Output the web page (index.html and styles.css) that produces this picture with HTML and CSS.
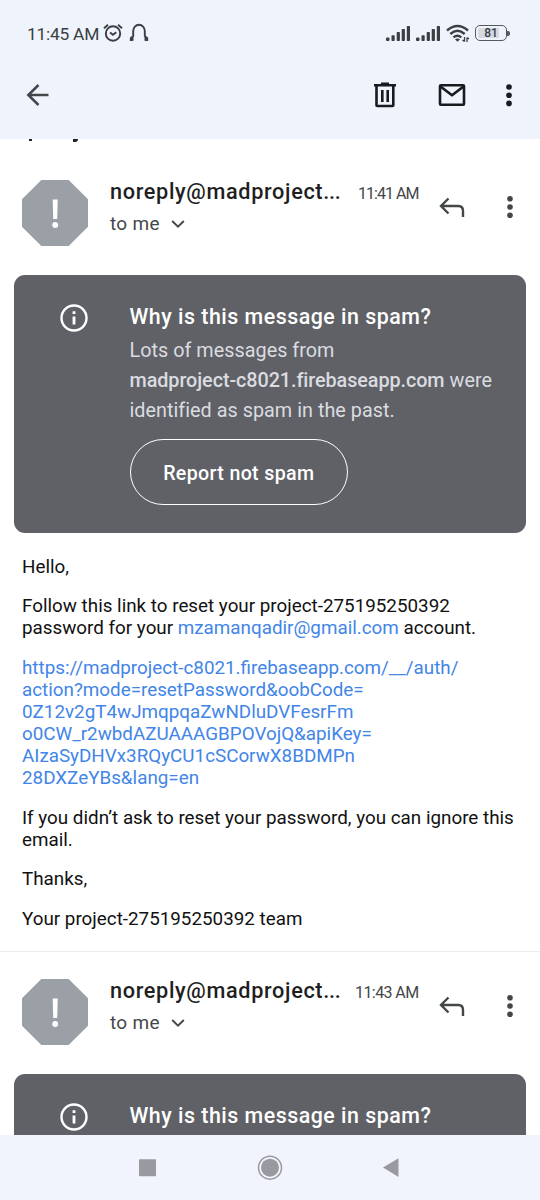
FILE: index.html
```
<!DOCTYPE html>
<html lang="en">
<head>
<meta charset="utf-8">
<title>Mail</title>
<link rel="stylesheet" href="styles.css">
</head>
<body>
<div class="screen">
  <header class="top">
    <div class="status">
      <span class="clock">11:45 AM</span>
      <svg class="alarm" width="20" height="20" viewBox="0 0 20 20" fill="none" stroke="#3b3e42" stroke-width="1.9"><circle cx="10" cy="10.5" r="7.2"/><path d="M1 5.2 5 1.8M19 5.2 15 1.8M7 9.5 10 11.7 13.3 9.2"/></svg>
      <svg class="phones" width="20" height="20" viewBox="0 0 20 20" fill="none" stroke="#3b3e42" stroke-width="1.9"><path d="M3.500 17H1.800V15.500L4.200 13V8A5.800 6.200 0 0 1 15.800 8V13L18.200 15.500V17H16.500"/><path d="M1.200 16h3.300M15.500 16h3.300" stroke-width="3.600"/></svg>
      <svg class="signal" width="25" height="17" viewBox="0 0 25 17" fill="#3b3e42"><rect x="0" y="12.500" width="3.500" height="3.500" rx="1"/><rect x="5.500" y="10.300" width="3.200" height="5.700" rx=".7"/><rect x="10.700" y="7" width="3.200" height="9" rx=".7"/><rect x="15.700" y="4" width="3.200" height="12" rx=".7"/><rect x="20.800" y="1" width="3.200" height="15" rx=".7"/></svg>
      <svg class="signal second" width="25" height="17" viewBox="0 0 25 17" fill="#3b3e42"><rect x="0" y="12.500" width="3.500" height="3.500" rx="1"/><rect x="5.500" y="10.300" width="3.200" height="5.700" rx=".7"/><rect x="10.700" y="7" width="3.200" height="9" rx=".7"/><rect x="15.700" y="4" width="3.200" height="12" rx=".7"/><rect x="20.800" y="1" width="3.200" height="15" rx=".7"/></svg>
      <svg class="wifi" width="24" height="19" viewBox="0 0 24 19" fill="none" stroke="#3b3e42" stroke-width="2.400"><path d="M1 6.500Q11.500-2.500 22 6.500M4.300 10Q11.500 3.500 18.700 10M7.500 13.300Q11.500 10 15.300 13.300"/><path d="M9 15.300Q11.500 13.700 14 15.300L11.500 17.800Z" fill="#3b3e42" stroke="none"/><path d="M18.500 13v4.500M16.500 16l2 1.500M21 18v-4.500M23 15l-2-1.500" stroke-width="1.300"/></svg>
      <span class="battery"><span class="level">81</span></span><span class="nub"></span>
    </div>
    <div class="actions">
      <svg class="back" width="24" height="24" viewBox="0 0 24 24" fill="none" stroke="#444749" stroke-width="2.500"><path d="M22.500 12H2.500M12.500 2 2.300 12l10.200 10"/></svg>
      <svg class="trash" width="24" height="26" viewBox="0 0 24 26" fill="none" stroke="#171b1e" stroke-width="2.600"><path d="M3.500 4v19.200q0 .8.800.8h15.200q.8 0 .8-.8V4M1 3.300h22M8 1.800h8M9.300 8v12M14.700 8v12"/></svg>
      <svg class="mail" width="28" height="24" viewBox="0 0 28 24" fill="none" stroke="#171b1e" stroke-width="2.600" stroke-linejoin="round"><rect x="2" y="2.300" width="24" height="19.500" rx="1"/><path d="M2.500 3.500 14 12.300 25.500 3.500"/></svg>
      <svg class="more" width="6" height="24" viewBox="0 0 6 24" fill="#171b1e"><circle cx="3" cy="4" r="2.800"/><circle cx="3" cy="12.200" r="2.800"/><circle cx="3" cy="20.400" r="2.800"/></svg>
    </div>
  </header>
  <main class="thread">
    <div class="clipped"><i class="tail-one"></i><i class="tail-two"></i></div>
    <article class="message">
      <div class="head">
        <svg class="avatar" width="66" height="66" viewBox="0 0 66 66"><path d="M19.300 0h27.400L66 19.300v27.400L46.700 66H19.300L0 46.700V19.300Z" fill="#9aa0a6"/><path d="M30.700 19.500h5l-.5 19.500h-4Z" fill="#fff"/><circle cx="33.200" cy="45" r="2.900" fill="#fff"/></svg>
        <div class="who">
          <div class="line"><span class="sender">noreply@madproject<span class="ellipsis">...</span></span><span class="time first">11:41 AM</span></div>
          <div class="to"><span>to me</span><svg width="14" height="10" viewBox="0 0 14 10" fill="none" stroke="#444749" stroke-width="1.900"><path d="M1.200 2 7 7.700 12.800 2"/></svg></div>
        </div>
        <svg class="reply" width="26" height="22" viewBox="0 0 26 22" fill="none" stroke="#444749" stroke-width="2.400"><path d="M9.500 1.500 2 9l7.500 7.500M2 9h17.500Q24 9 24 14v6"/></svg>
        <svg class="dots" width="6" height="24" viewBox="0 0 6 24" fill="#444749"><circle cx="3" cy="3.800" r="2.800"/><circle cx="3" cy="12" r="2.800"/><circle cx="3" cy="20.200" r="2.800"/></svg>
      </div>
      <section class="card">
        <svg class="info" width="28" height="28" viewBox="0 0 28 28" fill="none" stroke="#fff" stroke-width="2.400"><circle cx="14" cy="14" r="12.500"/><path d="M14 12.500V20.500M14 7.300V10" stroke-width="2.800"/></svg>
        <div class="reason">
          <h2>Why is this message in spam?</h2>
          <p>Lots of messages from<br><b>madproject-c8021.firebaseapp.com</b> were<br>identified as spam in the past.</p>
          <button>Report not spam</button>
        </div>
      </section>
      <div class="body">
        <p>Hello,</p>
        <p>Follow this link to reset your project-275195250392<br>password for your <a>mzamanqadir@gmail.com</a> account.</p>
        <p><a>https://madproject-c8021.firebaseapp.com/__/auth/<br>action?mode=resetPassword&amp;oobCode=<br>0Z12v2gT4wJmqpqaZwNDluDVFesrFm<br>o0CW_r2wbdAZUAAAGBPOVojQ&amp;apiKey=<br>AIzaSyDHVx3RQyCU1cSCorwX8BDMPn<br>28DXZeYBs&amp;lang=en</a></p>
        <p>If you didn’t ask to reset your password, you can ignore this<br>email.</p>
        <p>Thanks,</p>
        <p>Your project-275195250392 team</p>
      </div>
    </article>
    <article class="message next">
      <div class="head">
        <svg class="avatar" width="66" height="66" viewBox="0 0 66 66"><path d="M19.300 0h27.400L66 19.300v27.400L46.700 66H19.300L0 46.700V19.300Z" fill="#9aa0a6"/><path d="M30.700 19.500h5l-.5 19.500h-4Z" fill="#fff"/><circle cx="33.200" cy="45" r="2.900" fill="#fff"/></svg>
        <div class="who">
          <div class="line"><span class="sender">noreply@madproject<span class="ellipsis">...</span></span><span class="time">11:43 AM</span></div>
          <div class="to"><span>to me</span><svg width="14" height="10" viewBox="0 0 14 10" fill="none" stroke="#444749" stroke-width="1.900"><path d="M1.200 2 7 7.700 12.800 2"/></svg></div>
        </div>
        <svg class="reply" width="26" height="22" viewBox="0 0 26 22" fill="none" stroke="#444749" stroke-width="2.400"><path d="M9.500 1.500 2 9l7.500 7.500M2 9h17.500Q24 9 24 14v6"/></svg>
        <svg class="dots" width="6" height="24" viewBox="0 0 6 24" fill="#444749"><circle cx="3" cy="3.800" r="2.800"/><circle cx="3" cy="12" r="2.800"/><circle cx="3" cy="20.200" r="2.800"/></svg>
      </div>
      <section class="card">
        <svg class="info" width="28" height="28" viewBox="0 0 28 28" fill="none" stroke="#fff" stroke-width="2.400"><circle cx="14" cy="14" r="12.500"/><path d="M14 12.500V20.500M14 7.300V10" stroke-width="2.800"/></svg>
        <div class="reason"><h2>Why is this message in spam?</h2></div>
      </section>
    </article>
  </main>
  <nav class="nav">
    <svg width="540" height="65" viewBox="0 0 540 65" fill="#999a9f"><rect x="139" y="24.200" width="17" height="17" rx=".8"/><circle cx="270" cy="32.700" r="11.500" fill="none" stroke="#999a9f" stroke-width="1.500"/><circle cx="270" cy="32.700" r="9"/><path d="M383 32.500 398.500 23.300V41.900Z"/></svg>
  </nav>
</div>
</body>
</html>
```
FILE: styles.css
```
* { box-sizing: border-box; }
body { margin: 0; background: #fff; font-family: Roboto, sans-serif; }
svg { display: block; flex: none; }
.screen { width: 540px; height: 1200px; display: flex; flex-direction: column; overflow: hidden; }
.top { height: 139px; flex: none; background: #eff4fc; }
.status { height: 66px; padding: 0 30px 0 27px; display: flex; align-items: center; color: #3b3e42; }
.clock { font-size: 17.4px; letter-spacing: -.25px; width: 76px; white-space: nowrap; padding-top: 2px; }
.alarm { margin-top: -1px; }
.phones { margin: 0 auto 0 6px; }
.signal { margin-top: 1px; }
.second { margin-left: 5px; }
.wifi { margin-left: 5px; }
.battery { width: 32px; height: 16px; margin-left: 5px; border: 1.5px solid #55585d; border-radius: 5px; padding: 2px 2px; }
.level { display: block; height: 10px; border-radius: 2px; background: linear-gradient(90deg, #d5d9e1 81%, transparent 81%); font-size: 12px; line-height: 11px; font-weight: 500; text-align: center; }
.nub { width: 3px; height: 5px; background: #55585d; border-radius: 0 2px 2px 0; }
.actions { height: 58px; padding: 0 28px 0 26px; display: flex; align-items: center; }
.back { margin-right: auto; }
.trash { margin-right: 40.500px; }
.mail { margin-right: 40.500px; }
.thread { flex: 1; min-height: 0; overflow: hidden; }
.clipped { height: 13px; padding-left: 29px; display: flex; gap: 41px; }
.clipped i { background: #222; width: 3px; height: 2px; }
.clipped .tail-two { width: 5px; height: 3px; border-radius: 0 0 3px 0; }
.head { height: 122.500px; padding: 27.500px 27px 0 22px; display: flex; align-items: flex-start; }
.next .head { height: 122px; padding-top: 27px; }
.who { width: 331px; padding-left: 22px; }
.line { display: flex; justify-content: space-between; align-items: baseline; height: 25px; line-height: 24px; white-space: nowrap; }
.sender { font-size: 21.700px; font-weight: 500; color: #1f1f1f; letter-spacing: .65px; }
.ellipsis { letter-spacing: -.3px; }
.time { margin-right: -2.500px; font-size: 16px; color: #444749; letter-spacing: -.6px; }
.time.first { letter-spacing: -.95px; }
.to { display: flex; align-items: center; gap: 11px; height: 25px; margin-top: 6.500px; font-size: 19px; color: #444749; letter-spacing: .3px; }
.reply { margin: 17px 42px 0 23px; }
.dots { margin-top: 15.500px; margin-left: auto; }
.card { margin: 0 14px; height: 258px; padding: 27px 0 0 46px; display: flex; border-radius: 11px; background: #5f6166; color: #fff; }
.info { margin: 2.500px 41.500px 0 0; }
.reason { white-space: nowrap; }
h2 { margin: 0; font-size: 21.400px; font-weight: 500; line-height: 30px; letter-spacing: .5px; }
.reason p { margin: 4.500px 0 13px; font-size: 19.800px; line-height: 30px; color: #dadce0; letter-spacing: .03px; }
.reason b { font-weight: 500; letter-spacing: -.07px; }
button { display: block; width: 218.500px; height: 65.500px; padding: 4px 0 0; border: 1.500px solid #fff; border-radius: 33px; background: none; color: #fff; font: 500 19.600px Roboto, sans-serif; letter-spacing: .35px; }
.body { height: 419px; padding: 23px 22px 0; font-size: 18.820px; line-height: 22px; color: #111; white-space: nowrap; border-bottom: 1px solid #eceded; }
.body p { margin: 0 0 17.700px; }
.body a { color: #4285e8; }
.nav { height: 65px; flex: none; background: #f1f4fc; }
```
